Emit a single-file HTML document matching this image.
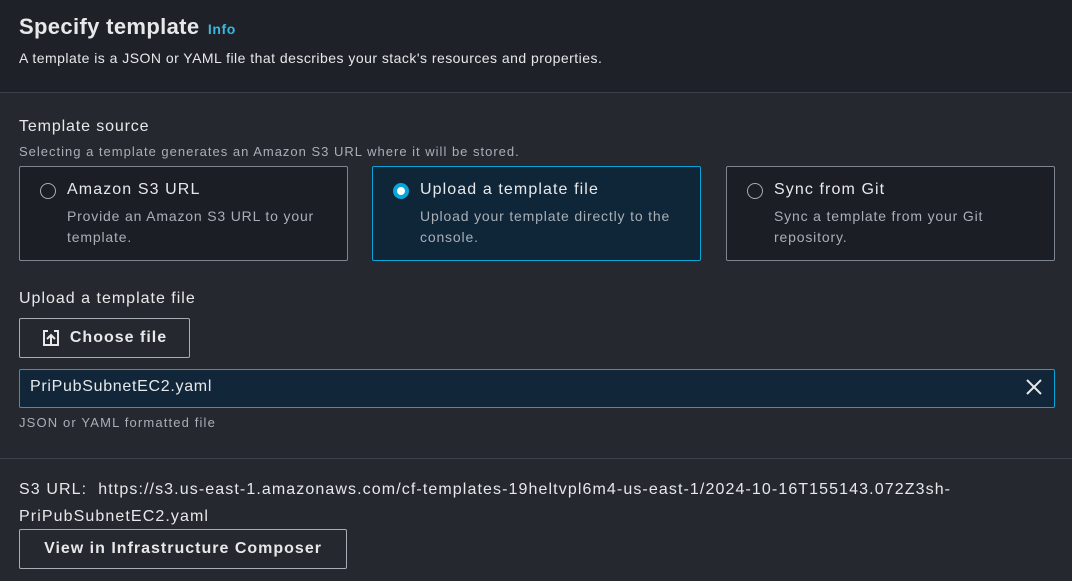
<!DOCTYPE html>
<html><head><style>
*{margin:0;padding:0;box-sizing:border-box}
body{width:1072px;height:581px;background:#25282e;font-family:"Liberation Sans",sans-serif;color:#e6e8ea;position:relative;overflow:hidden}
.a{position:absolute;white-space:nowrap}
.hdr{position:absolute;left:0;top:0;width:1072px;height:93px;background:#1e2128;border-bottom:1px solid #3c4048}
.card{position:absolute;top:166px;width:329px;height:95px;border:1px solid #7d8590;border-radius:2px;background:#1b1e25}
.card.sel{border-color:#0aa5d8;background:#0f2538}
.rad{position:absolute;left:20px;top:16px;width:16px;height:16px;border-radius:50%;border:1.5px solid #a7adb5}
.sel .rad{border:4.5px solid #0aa5d8;background:#fff}
.ct{position:absolute;left:47px;top:14px;font-size:16px;color:#e6e8ea;letter-spacing:1.1px}
.cd{position:absolute;left:47px;top:39px;font-size:14px;color:#a9afb7;line-height:21px;letter-spacing:0.83px}
.btn{position:absolute;border:1px solid #a7adb5;border-radius:2px;font-weight:bold;font-size:16px;color:#e6e8ea;display:flex;align-items:center;justify-content:center;letter-spacing:1px}
</style></head><body>
<div class="hdr"></div>
<div class="a" style="left:19px;top:14px;font-size:22px;font-weight:bold;letter-spacing:0.35px">Specify template <span style="font-size:14px;color:#3bb6e0;margin-left:2px;letter-spacing:0.6px">Info</span></div>
<div class="a" style="left:19px;top:50px;font-size:14px;letter-spacing:0.47px">A template is a JSON or YAML file that describes your stack's resources and properties.</div>
<div class="a" style="left:19px;top:118px;font-size:16px;letter-spacing:0.87px">Template source</div>
<div class="a" style="left:19px;top:144px;font-size:13px;color:#a9afb7;letter-spacing:1px">Selecting a template generates an Amazon S3 URL where it will be stored.</div>
<div class="card" style="left:19px"><div class="rad"></div><div class="ct">Amazon S3 URL</div><div class="cd">Provide an Amazon S3 URL to your<br>template.</div></div>
<div class="card sel" style="left:372px"><div class="rad"></div><div class="ct">Upload a template file</div><div class="cd">Upload your template directly to the<br>console.</div></div>
<div class="card" style="left:726px"><div class="rad"></div><div class="ct">Sync from Git</div><div class="cd">Sync a template from your Git<br>repository.</div></div>
<div class="a" style="left:19px;top:290px;font-size:16px;letter-spacing:1px">Upload a template file</div>
<div class="btn" style="left:19px;top:318px;width:171px;height:40px">
<svg width="18" height="18" viewBox="0 0 18 18" style="margin-right:10px"><path d="M6 2H2v14h14V2h-4M5 10l4-4 4 4M9 6v10" fill="none" stroke="#e6e8ea" stroke-width="2"/></svg>Choose file</div>
<div class="a" style="left:19px;top:369px;width:1036px;height:39px;border:1px solid #0aa5d8;border-radius:2px;background:#12263a"></div>
<div class="a" style="left:30px;top:378px;font-size:16px;letter-spacing:0.7px">PriPubSubnetEC2.yaml</div>
<svg class="a" style="left:1025px;top:378px" width="18" height="18" viewBox="0 0 18 18"><path d="M2 2l14 14M16 2L2 16" stroke="#e6e8ea" stroke-width="2"/></svg>
<div class="a" style="left:19px;top:415px;font-size:13px;color:#a9afb7;letter-spacing:1.15px">JSON or YAML formatted file</div>
<div class="a" style="left:0;top:458px;width:1072px;height:1px;background:#3c4048"></div>
<div class="a" style="left:19px;top:476px;font-size:16px;letter-spacing:1.1px;line-height:27px">S3 URL:&nbsp; https://s3.us-east-1.amazonaws.com/cf-templates-19heltvpl6m4-us-east-1/2024-10-16T155143.072Z3sh-<br>PriPubSubnetEC2.yaml</div>
<div class="btn" style="left:19px;top:529px;width:328px;height:40px">View in Infrastructure Composer</div>
</body></html>
